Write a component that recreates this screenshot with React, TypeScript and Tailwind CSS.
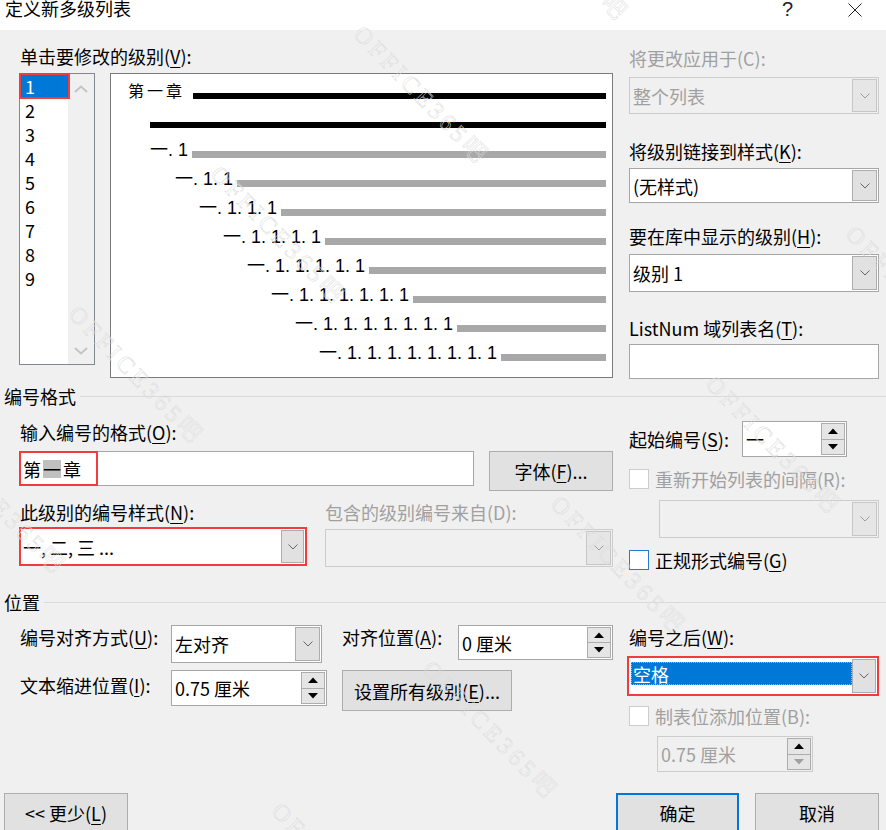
import React from 'react';

type Kids = { children?: React.ReactNode };

function U({ children }: Kids) {
  return <span className="underline decoration-1 underline-offset-[3px]">{children}</span>;
}

function Label({ children, disabled, className = '' }: Kids & { disabled?: boolean; className?: string }) {
  return (
    <div
      className={`h-[24px] shrink-0 whitespace-nowrap text-[18px] leading-[24px] ${
        disabled ? 'text-[#a0a0a0]' : 'text-black'
      } ${className}`}
    >
      {children}
    </div>
  );
}

function Chevron({ color }: { color: string }) {
  return (
    <svg width="10" height="6" viewBox="0 0 10 6">
      <path d="M0.5 0.5L5 5L9.5 0.5" fill="none" stroke={color} strokeWidth="1" />
    </svg>
  );
}

function DropButton({ disabled, className = 'w-[25px]' }: { disabled?: boolean; className?: string }) {
  return (
    <div
      className={`flex shrink-0 items-center justify-center border ${
        disabled ? 'border-[#c6c6c6] bg-[#e6e6e6]' : 'border-[#adadad] bg-[#e1e1e1]'
      } ${className}`}
    >
      <Chevron color={disabled ? '#9c9c9c' : '#666666'} />
    </div>
  );
}

function Select({ value, className = '' }: { value: string; className?: string }) {
  return (
    <div className={`flex border border-[#a6a6a6] bg-white p-px ${className}`}>
      <div className="flex flex-1 items-center pl-[2px] text-[18px] leading-[24px]">{value}</div>
      <DropButton />
    </div>
  );
}

function DisabledSelect({ value, className = '' }: { value: string; className?: string }) {
  return (
    <div className={`flex border border-[#cccccc] bg-[#f0f0f0] p-px ${className}`}>
      <div className="flex flex-1 items-center pl-[2px] text-[18px] leading-[24px] text-[#a0a0a0]">{value}</div>
      <DropButton disabled />
    </div>
  );
}

function SpinButtons({ disabled }: { disabled?: boolean }) {
  return (
    <div className="flex w-[24px] shrink-0 flex-col">
      <div className="flex flex-1 items-center justify-center border border-[#adadad] bg-[#e5e5e5]">
        <svg width="10" height="6" viewBox="0 0 10 6">
          <path d="M0 6L5 0.5L10 6Z" fill="#000000" />
        </svg>
      </div>
      <div className="-mt-px flex flex-1 items-center justify-center border border-[#adadad] bg-[#e5e5e5]">
        <svg width="10" height="6" viewBox="0 0 10 6">
          <path d="M0 0L5 5.5L10 0Z" fill={disabled ? '#a0a0a0' : '#000000'} />
        </svg>
      </div>
    </div>
  );
}

function Spin({ value, disabled, className = '' }: { value: string; disabled?: boolean; className?: string }) {
  return (
    <div
      className={`flex shrink-0 border p-px ${
        disabled ? 'border-[#cccccc] bg-[#f0f0f0] text-[#a0a0a0]' : 'border-[#a6a6a6] bg-white text-black'
      } ${className}`}
    >
      <div className="flex flex-1 items-center pl-[2px] text-[18px] leading-[24px]">{value}</div>
      <SpinButtons disabled={disabled} />
    </div>
  );
}

function Button({ children, className = '' }: Kids & { className?: string }) {
  return (
    <div
      className={`flex shrink-0 items-center justify-center bg-[#e1e1e1] text-[18px] leading-[24px] ${className}`}
    >
      {children}
    </div>
  );
}

function Checkbox({ tone = 'off' }: { tone?: 'off' | 'focus' }) {
  return (
    <div
      className={`h-[20px] w-[20px] shrink-0 border bg-white ${
        tone === 'focus' ? 'border-[#2a78c8]' : 'border-[#cccccc]'
      }`}
    />
  );
}

function SectionHeader({ title }: { title: string }) {
  return (
    <div className="flex h-[24px] items-center pl-[4px]">
      <span className="text-[18px] leading-[24px]">{title}</span>
      <div className="ml-[4px] h-px flex-1 bg-[#dadada]" />
    </div>
  );
}

const levelRows = [
  { indent: 'pl-[39px]', text: '一. 1' },
  { indent: 'pl-[64px]', text: '一. 1. 1' },
  { indent: 'pl-[88px]', text: '一. 1. 1. 1' },
  { indent: 'pl-[112px]', text: '一. 1. 1. 1. 1' },
  { indent: 'pl-[136px]', text: '一. 1. 1. 1. 1. 1' },
  { indent: 'pl-[160px]', text: '一. 1. 1. 1. 1. 1. 1' },
  { indent: 'pl-[184px]', text: '一. 1. 1. 1. 1. 1. 1. 1' },
  { indent: 'pl-[208px]', text: '一. 1. 1. 1. 1. 1. 1. 1. 1' },
];

function Preview() {
  return (
    <div className="ml-[15px] h-[305px] w-[503px] shrink-0 border border-[#7a7a7a] bg-white pr-[6px] pt-[3px]">
      <div className="flex h-[29px] items-center pl-[17px]">
        <span className="-mt-[3px] text-[16px] leading-[20px] tracking-[3px]">第一章</span>
        <div className="ml-[8px] mt-[9px] h-[6px] flex-1 bg-black" />
      </div>
      <div className="flex h-[29px] items-center pl-[39px]">
        <div className="mt-[9px] h-[6px] flex-1 bg-black" />
      </div>
      {levelRows.map((row) => (
        <div key={row.text} className={`flex h-[29px] items-center ${row.indent}`}>
          <span className="whitespace-nowrap font-['Liberation_Sans','Noto_Sans_CJK_SC',sans-serif] text-[18px] leading-[20px]">
            {row.text}
          </span>
          <div className="ml-[4px] mt-[9px] h-[7px] flex-1 bg-[#a8a8a8]" />
        </div>
      ))}
    </div>
  );
}

function LevelList() {
  const levels = ['1', '2', '3', '4', '5', '6', '7', '8', '9'];
  return (
    <div className="relative flex h-[292px] w-[76px] shrink-0 border border-[#828790] bg-white">
      <div className="w-[48px]">
        {levels.map((n, i) => (
          <div
            key={n}
            className={`h-[24px] pl-[5px] text-[18px] leading-[24px] ${i === 0 ? 'bg-[#0078d7] text-white' : ''}`}
          >
            {n}
          </div>
        ))}
      </div>
      <div className="flex flex-1 flex-col items-center justify-between bg-[#f0f0f0] pb-[9px] pt-[11px]">
        <svg width="14" height="8" viewBox="0 0 14 8">
          <path d="M1 7L7 1.5L13 7" fill="none" stroke="#c4c4c4" strokeWidth="2" />
        </svg>
        <svg width="14" height="8" viewBox="0 0 14 8">
          <path d="M1 1L7 6.5L13 1" fill="none" stroke="#c4c4c4" strokeWidth="2" />
        </svg>
      </div>
      <div className="absolute -left-px -top-px h-[26px] w-[51px] border-2 border-[#f23b3b]" />
    </div>
  );
}

const marks = [
  'left-[-55px] top-[430px]',
  'left-[83px] top-[300px]',
  'left-[225px] top-[160px]',
  'left-[368px] top-[20px]',
  'left-[508px] top-[-123px]',
  'left-[286px] top-[797px]',
  'left-[437px] top-[655px]',
  'left-[565px] top-[490px]',
  'left-[720px] top-[370px]',
  'left-[860px] top-[220px]',
];

export default function App() {
  return (
    <div className="relative h-[830px] w-[886px] overflow-hidden bg-[#f0f0f0] font-['Noto_Sans_CJK_SC',sans-serif] text-[18px] text-black">
      {/* title bar */}
      <div className="flex h-[30px] items-start bg-white">
        <div className="-mt-[4px] pl-[5px] leading-[24px]">定义新多级列表</div>
        <div className="flex-1" />
        <div className="-mt-[3px] w-[66px] font-['Liberation_Sans',sans-serif] text-[20px] leading-[24px] text-[#222]">?</div>
        <svg className="mr-[24px] mt-[3px]" width="14" height="14" viewBox="0 0 14 14">
          <path d="M0.5 0.5L13.5 13.5M13.5 0.5L0.5 13.5" stroke="#222" strokeWidth="1" />
        </svg>
      </div>

      {/* level picker, preview, right options */}
      <div className="flex h-[348px] pl-[19px]">
        <div className="w-[594px] shrink-0 pt-[14px]">
          <Label className="pl-px">
            单击要修改的级别(<U>V</U>):
          </Label>
          <div className="mt-[5px] flex items-start">
            <LevelList />
            <Preview />
          </div>
        </div>
        <div className="ml-[16px] w-[250px] shrink-0 pt-[16px]">
          <Label disabled>将更改应用于(C):</Label>
          <DisabledSelect className="mt-[7px] h-[37px]" value="整个列表" />
          <Label className="mt-[25px]">
            将级别链接到样式(<U>K</U>):
          </Label>
          <Select className="mt-[5px] h-[35px]" value="(无样式)" />
          <Label className="mt-[21px]">
            要在库中显示的级别(<U>H</U>):
          </Label>
          <Select className="mt-[6px] h-[38px]" value="级别 1" />
          <Label className="mt-[24px]">
            ListNum 域列表名(<U>T</U>):
          </Label>
          <div className="mt-[4px] h-[35px] border border-[#a6a6a6] bg-white" />
        </div>
      </div>

      <div className="mt-[6px]">
        <SectionHeader title="编号格式" />
      </div>

      {/* number format */}
      <div className="flex h-[182px] pl-[19px]">
        <div className="w-[594px] shrink-0">
          <Label className="mt-[12px] pl-px">
            输入编号的格式(<U>O</U>):
          </Label>
          <div className="mt-[7px] flex items-start">
            <div className="relative flex h-[35px] w-[455px] shrink-0 items-center border border-[#a6a6a6] bg-white pl-[3px]">
              <span className="text-[18px] leading-[18px]">第</span>
              <span className="ml-[2px] bg-[#c0c0c0] text-[18px] leading-[18px]">一</span>
              <span className="ml-[2px] text-[18px] leading-[18px]">章</span>
              <div className="absolute -left-px -top-px h-[35px] w-[79px] border-2 border-[#f23b3b]" />
            </div>
            <Button className="ml-[15px] h-[40px] w-[124px] border border-[#adadad]">
              字体(<U>F</U>)...
            </Button>
          </div>
          <div className="mt-[9px] flex">
            <Label className="w-[306px] pl-px">
              此级别的编号样式(<U>N</U>):
            </Label>
            <Label disabled>包含的级别编号来自(D):</Label>
          </div>
          <div className="mt-[3px] flex items-start">
            <div className="flex h-[39px] w-[288px] shrink-0 border-2 border-[#f23b3b] bg-white p-px">
              <div className="flex flex-1 items-center pl-px text-[18px] leading-[24px]">一, 二, 三 ...</div>
              <DropButton className="w-[23px]" />
            </div>
            <DisabledSelect className="ml-[18px] mt-[2px] h-[38px] w-[288px]" value="" />
          </div>
        </div>

        <div className="ml-[16px] w-[250px] shrink-0">
          <div className="mt-[13px] flex h-[36px] items-center">
            <Label className="w-[113px]">
              起始编号(<U>S</U>):
            </Label>
            <Spin className="h-[36px] w-[105px]" value="一" />
          </div>
          <div className="mt-[12px] flex h-[20px] items-center">
            <Checkbox />
            <Label disabled className="ml-[6px]">
              重新开始列表的间隔(R):
            </Label>
          </div>
          <DisabledSelect className="ml-[30px] mt-[11px] h-[38px] w-[220px]" value="" />
          <div className="mt-[12px] flex h-[20px] items-center">
            <Checkbox tone="focus" />
            <Label className="ml-[6px]">
              正规形式编号(<U>G</U>)
            </Label>
          </div>
        </div>
      </div>

      <SectionHeader title="位置" />

      {/* position */}
      <div className="flex h-[179px] pl-[19px]">
        <div className="w-[594px] shrink-0">
          <div className="mt-[11px] flex items-start">
            <Label className="w-[152px] pl-px">
              编号对齐方式(<U>U</U>):
            </Label>
            <Select className="h-[38px] w-[151px] shrink-0" value="左对齐" />
            <Label className="ml-[20px] w-[116px]">
              对齐位置(<U>A</U>):
            </Label>
            <Spin className="h-[35px] w-[155px]" value="0 厘米" />
          </div>
          <div className="mt-[7px] flex items-start">
            <Label className="mt-[3px] w-[152px] pl-px">
              文本缩进位置(<U>I</U>):
            </Label>
            <Spin className="h-[36px] w-[156px]" value="0.75 厘米" />
            <Button className="ml-[15px] h-[41px] w-[170px] border border-[#adadad]">
              设置所有级别(<U>E</U>)...
            </Button>
          </div>
        </div>

        <div className="ml-[14px] w-[252px] shrink-0">
          <Label className="mt-[11px] pl-[2px]">
            编号之后(<U>W</U>):
          </Label>
          <div className="mt-[7px] flex h-[40px] border-2 border-[#f23b3b] bg-white p-px">
            <div className="flex-1 pl-px pt-[3px]">
              <div className="flex h-[23px] items-center border border-dotted border-[#8fb8e6] bg-[#0078d7] pl-px text-[18px] leading-[24px] text-white">
                空格
              </div>
            </div>
            <DropButton className="w-[24px]" />
          </div>
          <div className="mt-[10px] flex h-[20px] items-center pl-[2px]">
            <Checkbox />
            <Label disabled className="ml-[6px]">
              制表位添加位置(B):
            </Label>
          </div>
          <Spin disabled className="ml-[30px] mt-[10px] h-[36px] w-[156px]" value="0.75 厘米" />
        </div>
      </div>

      {/* footer buttons */}
      <div className="flex h-[40px]">
        <Button className="ml-[4px] h-[40px] w-[124px] border border-[#adadad]">
          &lt;&lt; 更少(<U>L</U>)
        </Button>
        <div className="flex-1" />
        <Button className="h-[40px] w-[123px] border-2 border-[#0078d7]">确定</Button>
        <Button className="ml-[16px] mr-[7px] h-[40px] w-[124px] border border-[#adadad]">取消</Button>
      </div>

      {/* watermark */}
      {marks.map((pos) => (
        <div
          key={pos}
          aria-hidden="true"
          className={`pointer-events-none absolute ${pos} origin-top-left rotate-[46deg] select-none whitespace-nowrap font-['Liberation_Serif','Noto_Sans_CJK_SC',serif] text-[24px] leading-[28px] tracking-[4px] text-transparent [-webkit-text-stroke:0.5px_#dcdcdc]`}
        >
          OFFICE365吧
        </div>
      ))}
    </div>
  );
}
